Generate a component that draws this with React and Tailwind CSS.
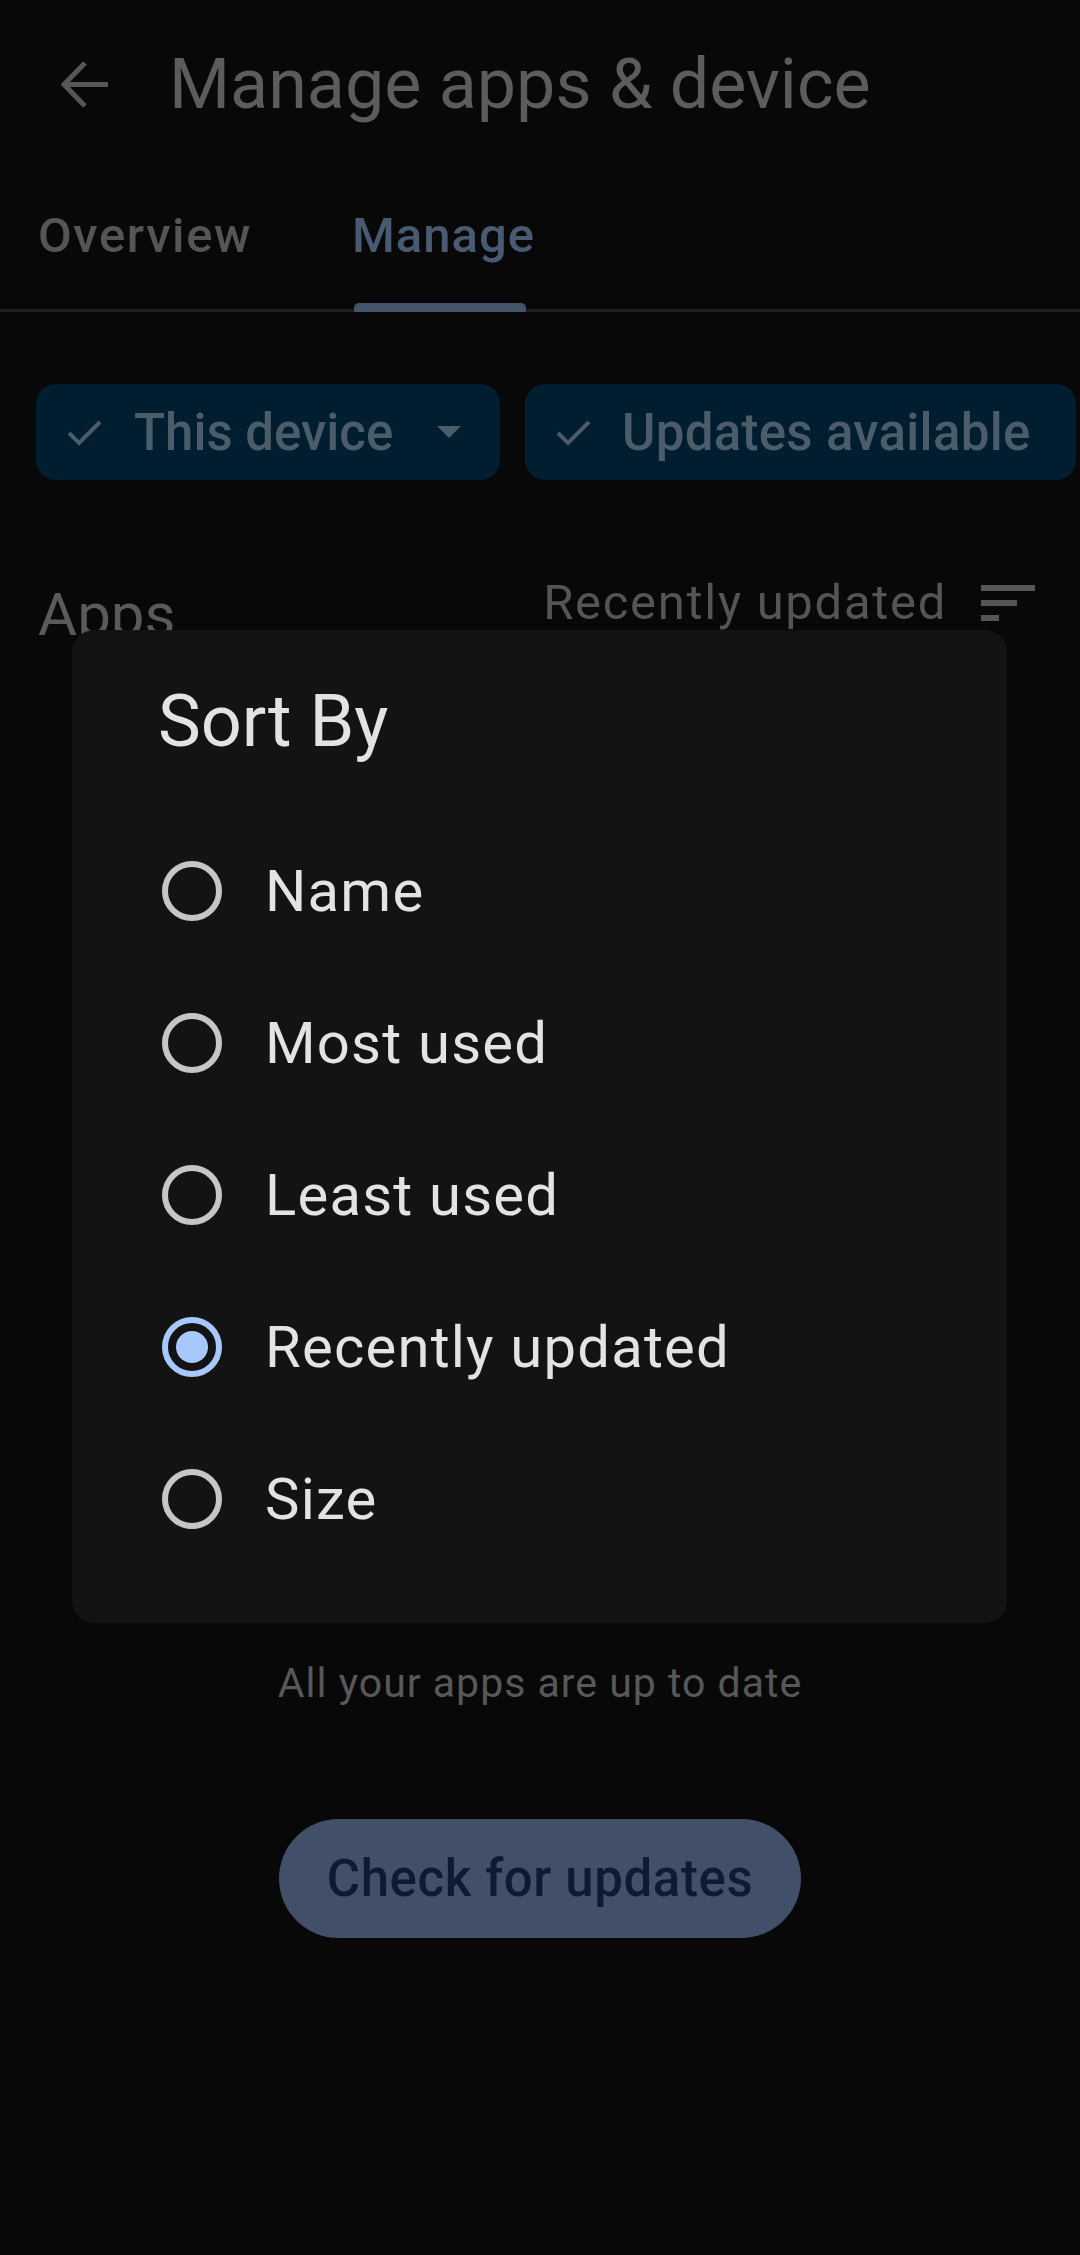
import React, { useState } from 'react';

const SORT_OPTIONS = ['Name', 'Most used', 'Least used', 'Recently updated', 'Size'];

function CheckIcon() {
  return (
    <svg width="35" height="27" viewBox="0 0 35 27" className="shrink-0">
      <path d="M2 14 L12 24 L33 3" fill="none" stroke="#4c5c68" strokeWidth="4" />
    </svg>
  );
}

function Radio({ checked }) {
  return (
    <div
      className={`w-[60px] h-[60px] rounded-full border-[6px] flex items-center justify-center shrink-0 ${
        checked ? 'border-[#a8c7fa]' : 'border-[#c6c6c6]'
      }`}
    >
      {checked && <div className="w-[32px] h-[32px] rounded-full bg-[#a8c7fa]" />}
    </div>
  );
}

export default function App() {
  const [sortBy, setSortBy] = useState('Recently updated');

  return (
    <div
      className="relative w-[1080px] h-[2255px] bg-[#080808] overflow-hidden"
      style={{ fontFamily: 'Roboto, "Noto Sans", sans-serif' }}
    >
      {/* Top bar */}
      <div className="flex items-center h-[168px]">
        <div className="w-[169px] pl-[61px]">
          <svg width="47" height="47" viewBox="0 0 47 47">
            <path d="M24 2 L3 23.5 L24 45 M3 23.5 H47" fill="none" stroke="#575757" strokeWidth="5" />
          </svg>
        </div>
        <h1 className="text-[70px] leading-none text-[#5c5c5c]">Manage apps &amp; device</h1>
      </div>

      {/* Tabs */}
      <div className="flex h-[144px] border-b-[3px] border-[#1f1f1f] pl-[38px]">
        <div className="pt-[43px] text-[49px] leading-none font-medium tracking-[1.6px] text-[#555555]">Overview</div>
        <div className="ml-[100px] flex flex-col">
          <div className="pt-[43px] text-[49px] leading-none font-medium tracking-[1px] text-[#4b5a73]">Manage</div>
          <div className="mt-auto -mb-[3px] ml-[2px] w-[172px] h-[9px] rounded-t-[5px] bg-[#46546a]" />
        </div>
      </div>

      {/* Filter chips */}
      <div className="flex gap-[25px] pl-[36px] mt-[72px]">
        <div className="flex items-center shrink-0 w-[464px] h-[96px] rounded-[20px] bg-[#011d30] pl-[31px]">
          <CheckIcon />
          <span className="ml-[32px] text-[51px] leading-none font-medium text-[#4c5d6a]">This device</span>
          <svg width="24" height="12" viewBox="0 0 24 12" className="ml-[44px]">
            <path d="M0 0 H24 L12 12 Z" fill="#4c5c68" />
          </svg>
        </div>
        <div className="flex items-center shrink-0 w-[551px] h-[96px] rounded-[20px] bg-[#011d30] pl-[31px]">
          <CheckIcon />
          <span className="ml-[31px] text-[51px] leading-none font-medium tracking-[0.3px] text-[#4c5d6a]">Updates available</span>
        </div>
      </div>

      {/* Apps header */}
      <div className="flex items-start h-[98px] mt-[98px] pl-[38px] pr-[45px]">
        <span className="mt-[7px] text-[60px] leading-none text-[#5a5a5a]">Apps</span>
        <div className="ml-auto flex items-start">
          <span className="text-[49px] leading-none tracking-[1.7px] text-[#555555]">Recently updated</span>
          <div className="ml-[34px] mt-[7px] flex flex-col gap-[9px]">
            <div className="w-[54px] h-[6px] bg-[#555555]" />
            <div className="w-[36px] h-[6px] bg-[#555555]" />
            <div className="w-[18px] h-[6px] bg-[#555555]" />
          </div>
        </div>
      </div>

      {/* Empty state */}
      <div className="flex flex-col items-center mt-[987px]">
        <p className="text-[41px] leading-none tracking-[1px] text-[#585858]">All your apps are up to date</p>
        <button className="mt-[115px] w-[522px] h-[119px] rounded-full bg-[#415068] text-[51px] leading-none font-medium tracking-[0.6px] text-[#0d1a33]">
          Check for updates
        </button>
      </div>

      {/* Sort dialog */}
      <div className="absolute left-[72px] top-[630px] w-[935px] h-[993px] rounded-[22px] bg-[#131313] pt-[56px]">
        <h2 className="pl-[86px] text-[72px] leading-none text-[#e3e3e3]">Sort By</h2>
        <div className="mt-[57px]">
          {SORT_OPTIONS.map((opt) => (
            <div
              key={opt}
              onClick={() => setSortBy(opt)}
              className="flex items-center h-[152px] pl-[90px] cursor-pointer"
            >
              <Radio checked={sortBy === opt} />
              <span className="ml-[43px] text-[58px] leading-none tracking-[1.2px] text-[#e3e3e3]">{opt}</span>
            </div>
          ))}
        </div>
      </div>
    </div>
  );
}
